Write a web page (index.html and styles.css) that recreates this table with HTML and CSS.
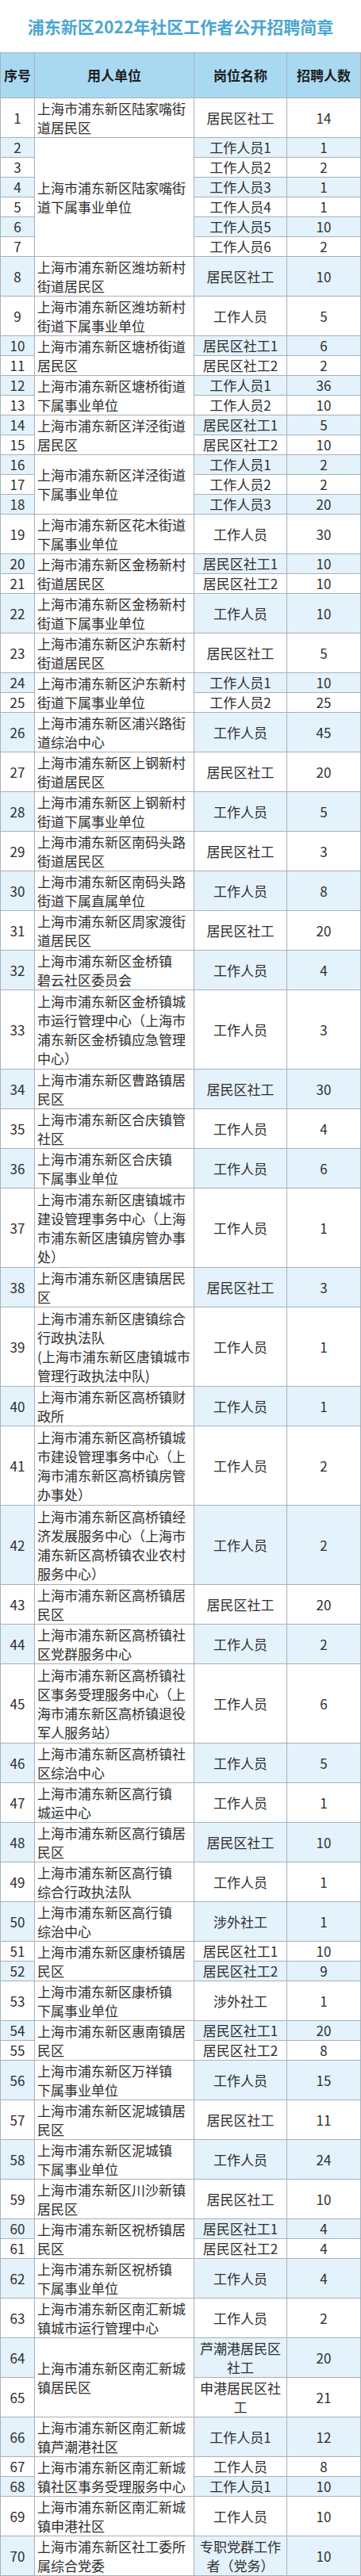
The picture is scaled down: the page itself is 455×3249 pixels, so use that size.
FILE: index.html
```html
<!DOCTYPE html>
<html lang="zh-CN">
<head>
<meta charset="utf-8">
<title>浦东新区2022年社区工作者公开招聘简章</title>
<link rel="stylesheet" href="styles.css">
</head>
<body>
<div class="sheet">
  <h1 class="title">浦东新区2022年社区工作者公开招聘简章</h1>
  <div class="grid">
    <div class="c hd">序号</div><div class="c hd">用人单位</div><div class="c hd">岗位名称</div><div class="c hd">招聘人数</div>

    <div class="c r2">1</div><div class="c u r2">上海市浦东新区陆家嘴街<br>道居民区</div><div class="c r2">居民区社工</div><div class="c r2">14</div>
    <div class="c b">2</div><div class="c u r6">上海市浦东新区陆家嘴街<br>道下属事业单位</div><div class="c b">工作人员1</div><div class="c b">1</div>
    <div class="c">3</div><div class="c">工作人员2</div><div class="c">2</div>
    <div class="c b">4</div><div class="c b">工作人员3</div><div class="c b">1</div>
    <div class="c">5</div><div class="c">工作人员4</div><div class="c">1</div>
    <div class="c b">6</div><div class="c b">工作人员5</div><div class="c b">10</div>
    <div class="c">7</div><div class="c">工作人员6</div><div class="c">2</div>
    <div class="c b r2">8</div><div class="c u r2">上海市浦东新区潍坊新村<br>街道居民区</div><div class="c b r2">居民区社工</div><div class="c b r2">10</div>
    <div class="c r2">9</div><div class="c u r2">上海市浦东新区潍坊新村<br>街道下属事业单位</div><div class="c r2">工作人员</div><div class="c r2">5</div>
    <div class="c b">10</div><div class="c u r2">上海市浦东新区塘桥街道<br>居民区</div><div class="c b">居民区社工1</div><div class="c b">6</div>
    <div class="c">11</div><div class="c">居民区社工2</div><div class="c">2</div>
    <div class="c b">12</div><div class="c u r2">上海市浦东新区塘桥街道<br>下属事业单位</div><div class="c b">工作人员1</div><div class="c b">36</div>
    <div class="c">13</div><div class="c">工作人员2</div><div class="c">10</div>
    <div class="c b">14</div><div class="c u r2">上海市浦东新区洋泾街道<br>居民区</div><div class="c b">居民区社工1</div><div class="c b">5</div>
    <div class="c">15</div><div class="c">居民区社工2</div><div class="c">10</div>
    <div class="c b">16</div><div class="c u r3">上海市浦东新区洋泾街道<br>下属事业单位</div><div class="c b">工作人员1</div><div class="c b">2</div>
    <div class="c">17</div><div class="c">工作人员2</div><div class="c">2</div>
    <div class="c b">18</div><div class="c b">工作人员3</div><div class="c b">20</div>
    <div class="c r2">19</div><div class="c u r2">上海市浦东新区花木街道<br>下属事业单位</div><div class="c r2">工作人员</div><div class="c r2">30</div>
    <div class="c b">20</div><div class="c u r2">上海市浦东新区金杨新村<br>街道居民区</div><div class="c b">居民区社工1</div><div class="c b">10</div>
    <div class="c">21</div><div class="c">居民区社工2</div><div class="c">10</div>
    <div class="c b r2">22</div><div class="c u r2">上海市浦东新区金杨新村<br>街道下属事业单位</div><div class="c b r2">工作人员</div><div class="c b r2">10</div>
    <div class="c r2">23</div><div class="c u r2">上海市浦东新区沪东新村<br>街道居民区</div><div class="c r2">居民区社工</div><div class="c r2">5</div>
    <div class="c b">24</div><div class="c u r2">上海市浦东新区沪东新村<br>街道下属事业单位</div><div class="c b">工作人员1</div><div class="c b">10</div>
    <div class="c">25</div><div class="c">工作人员2</div><div class="c">25</div>
    <div class="c b r2">26</div><div class="c u r2">上海市浦东新区浦兴路街<br>道综治中心</div><div class="c b r2">工作人员</div><div class="c b r2">45</div>
    <div class="c r2">27</div><div class="c u r2">上海市浦东新区上钢新村<br>街道居民区</div><div class="c r2">居民区社工</div><div class="c r2">20</div>
    <div class="c b r2">28</div><div class="c u r2">上海市浦东新区上钢新村<br>街道下属事业单位</div><div class="c b r2">工作人员</div><div class="c b r2">5</div>
    <div class="c r2">29</div><div class="c u r2">上海市浦东新区南码头路<br>街道居民区</div><div class="c r2">居民区社工</div><div class="c r2">3</div>
    <div class="c b r2">30</div><div class="c u r2">上海市浦东新区南码头路<br>街道下属直属单位</div><div class="c b r2">工作人员</div><div class="c b r2">8</div>
    <div class="c r2">31</div><div class="c u r2">上海市浦东新区周家渡街<br>道居民区</div><div class="c r2">居民区社工</div><div class="c r2">20</div>
    <div class="c b r2">32</div><div class="c u r2">上海市浦东新区金桥镇<br>碧云社区委员会</div><div class="c b r2">工作人员</div><div class="c b r2">4</div>
    <div class="c r4">33</div><div class="c u r4">上海市浦东新区金桥镇城<br>市运行管理中心（上海市<br>浦东新区金桥镇应急管理<br>中心）</div><div class="c r4">工作人员</div><div class="c r4">3</div>
    <div class="c b r2">34</div><div class="c u r2">上海市浦东新区曹路镇居<br>民区</div><div class="c b r2">居民区社工</div><div class="c b r2">30</div>
    <div class="c r2">35</div><div class="c u r2">上海市浦东新区合庆镇管<br>社区</div><div class="c r2">工作人员</div><div class="c r2">4</div>
    <div class="c b r2">36</div><div class="c u r2">上海市浦东新区合庆镇<br>下属事业单位</div><div class="c b r2">工作人员</div><div class="c b r2">6</div>
    <div class="c r4">37</div><div class="c u r4">上海市浦东新区唐镇城市<br>建设管理事务中心（上海<br>市浦东新区唐镇房管办事<br>处）</div><div class="c r4">工作人员</div><div class="c r4">1</div>
    <div class="c b r2">38</div><div class="c u r2">上海市浦东新区唐镇居民<br>区</div><div class="c b r2">居民区社工</div><div class="c b r2">3</div>
    <div class="c r4">39</div><div class="c u r4">上海市浦东新区唐镇综合<br>行政执法队<br>(上海市浦东新区唐镇城市<br>管理行政执法中队)</div><div class="c r4">工作人员</div><div class="c r4">1</div>
    <div class="c b r2">40</div><div class="c u r2">上海市浦东新区高桥镇财<br>政所</div><div class="c b r2">工作人员</div><div class="c b r2">1</div>
    <div class="c r4">41</div><div class="c u r4">上海市浦东新区高桥镇城<br>市建设管理事务中心（上<br>海市浦东新区高桥镇房管<br>办事处）</div><div class="c r4">工作人员</div><div class="c r4">2</div>
    <div class="c b r4">42</div><div class="c u r4">上海市浦东新区高桥镇经<br>济发展服务中心（上海市<br>浦东新区高桥镇农业农村<br>服务中心）</div><div class="c b r4">工作人员</div><div class="c b r4">2</div>
    <div class="c r2">43</div><div class="c u r2">上海市浦东新区高桥镇居<br>民区</div><div class="c r2">居民区社工</div><div class="c r2">20</div>
    <div class="c b r2">44</div><div class="c u r2">上海市浦东新区高桥镇社<br>区党群服务中心</div><div class="c b r2">工作人员</div><div class="c b r2">2</div>
    <div class="c r4">45</div><div class="c u r4">上海市浦东新区高桥镇社<br>区事务受理服务中心（上<br>海市浦东新区高桥镇退役<br>军人服务站）</div><div class="c r4">工作人员</div><div class="c r4">6</div>
    <div class="c b r2">46</div><div class="c u r2">上海市浦东新区高桥镇社<br>区综治中心</div><div class="c b r2">工作人员</div><div class="c b r2">5</div>
    <div class="c r2">47</div><div class="c u r2">上海市浦东新区高行镇<br>城运中心</div><div class="c r2">工作人员</div><div class="c r2">1</div>
    <div class="c b r2">48</div><div class="c u r2">上海市浦东新区高行镇居<br>民区</div><div class="c b r2">居民区社工</div><div class="c b r2">10</div>
    <div class="c r2">49</div><div class="c u r2">上海市浦东新区高行镇<br>综合行政执法队</div><div class="c r2">工作人员</div><div class="c r2">1</div>
    <div class="c b r2">50</div><div class="c u r2">上海市浦东新区高行镇<br>综治中心</div><div class="c b r2">涉外社工</div><div class="c b r2">1</div>
    <div class="c">51</div><div class="c u r2">上海市浦东新区康桥镇居<br>民区</div><div class="c">居民区社工1</div><div class="c">10</div>
    <div class="c b">52</div><div class="c b">居民区社工2</div><div class="c b">9</div>
    <div class="c r2">53</div><div class="c u r2">上海市浦东新区康桥镇<br>下属事业单位</div><div class="c r2">涉外社工</div><div class="c r2">1</div>
    <div class="c b">54</div><div class="c u r2">上海市浦东新区惠南镇居<br>民区</div><div class="c b">居民区社工1</div><div class="c b">20</div>
    <div class="c">55</div><div class="c">居民区社工2</div><div class="c">8</div>
    <div class="c b r2">56</div><div class="c u r2">上海市浦东新区万祥镇<br>下属事业单位</div><div class="c b r2">工作人员</div><div class="c b r2">15</div>
    <div class="c r2">57</div><div class="c u r2">上海市浦东新区泥城镇居<br>民区</div><div class="c r2">居民区社工</div><div class="c r2">11</div>
    <div class="c b r2">58</div><div class="c u r2">上海市浦东新区泥城镇<br>下属事业单位</div><div class="c b r2">工作人员</div><div class="c b r2">24</div>
    <div class="c r2">59</div><div class="c u r2">上海市浦东新区川沙新镇<br>居民区</div><div class="c r2">居民区社工</div><div class="c r2">10</div>
    <div class="c b">60</div><div class="c u r2">上海市浦东新区祝桥镇居<br>民区</div><div class="c b">居民区社工1</div><div class="c b">4</div>
    <div class="c">61</div><div class="c">居民区社工2</div><div class="c">4</div>
    <div class="c b r2">62</div><div class="c u r2">上海市浦东新区祝桥镇<br>下属事业单位</div><div class="c b r2">工作人员</div><div class="c b r2">4</div>
    <div class="c r2">63</div><div class="c u r2">上海市浦东新区南汇新城<br>镇城市运行管理中心</div><div class="c r2">工作人员</div><div class="c r2">2</div>
    <div class="c b r2">64</div><div class="c u r4">上海市浦东新区南汇新城<br>镇居民区</div><div class="c b r2">芦潮港居民区<br>社工</div><div class="c b r2">20</div>
    <div class="c r2">65</div><div class="c r2">申港居民区社<br>工</div><div class="c r2">21</div>
    <div class="c b r2">66</div><div class="c u r2">上海市浦东新区南汇新城<br>镇芦潮港社区</div><div class="c b r2">工作人员1</div><div class="c b r2">12</div>
    <div class="c">67</div><div class="c u r2">上海市浦东新区南汇新城<br>镇社区事务受理服务中心</div><div class="c">工作人员</div><div class="c">8</div>
    <div class="c b">68</div><div class="c b">工作人员1</div><div class="c b">10</div>
    <div class="c r2">69</div><div class="c u r2">上海市浦东新区南汇新城<br>镇申港社区</div><div class="c r2">工作人员</div><div class="c r2">10</div>
    <div class="c b r2">70</div><div class="c u r2">上海市浦东新区社工委所<br>属综合党委</div><div class="c b r2">专职党群工作<br>者（党务）</div><div class="c b r2">10</div>
  </div>
</div>
</body>
</html>
```

FILE: styles.css
```css
html, body {
  margin: 0;
  padding: 0;
  background: #ffffff;
}

.sheet {
  width: 455px;
  font-family: "Noto Sans CJK SC", "Noto Sans", sans-serif;
  color: #2e2e2e;
}

.title {
  margin: 0;
  height: 66px;
  display: flex;
  align-items: center;
  justify-content: center;
  font-size: 21px;
  font-weight: 700;
  color: #4aa6d1;
  letter-spacing: 0;
}

.grid {
  display: grid;
  grid-template-columns: 43px 201px 117px 93px;
  grid-template-rows: 57px;
  grid-auto-rows: 25px;
  border-top: 1px solid #a7b1ba;
  border-left: 1px solid #a7b1ba;
}

.c {
  box-sizing: border-box;
  border-right: 1px solid #a7b1ba;
  border-bottom: 1px solid #a7b1ba;
  display: flex;
  align-items: center;
  justify-content: center;
  text-align: center;
  font-size: 17px;
  line-height: 24px;
  white-space: nowrap;
  overflow: visible;
  background: #ffffff;
}

.hd {
  background: #a9d9f1;
  font-weight: 700;
  color: #1e1e1e;
}

.b {
  background: #e4f2fb;
}

.u {
  justify-content: flex-start;
  text-align: left;
  padding-left: 3px;
  background: #ffffff;
}

.r2 { grid-row: span 2; }
.r3 { grid-row: span 3; }
.r4 { grid-row: span 4; }
.r6 { grid-row: span 6; }
```
